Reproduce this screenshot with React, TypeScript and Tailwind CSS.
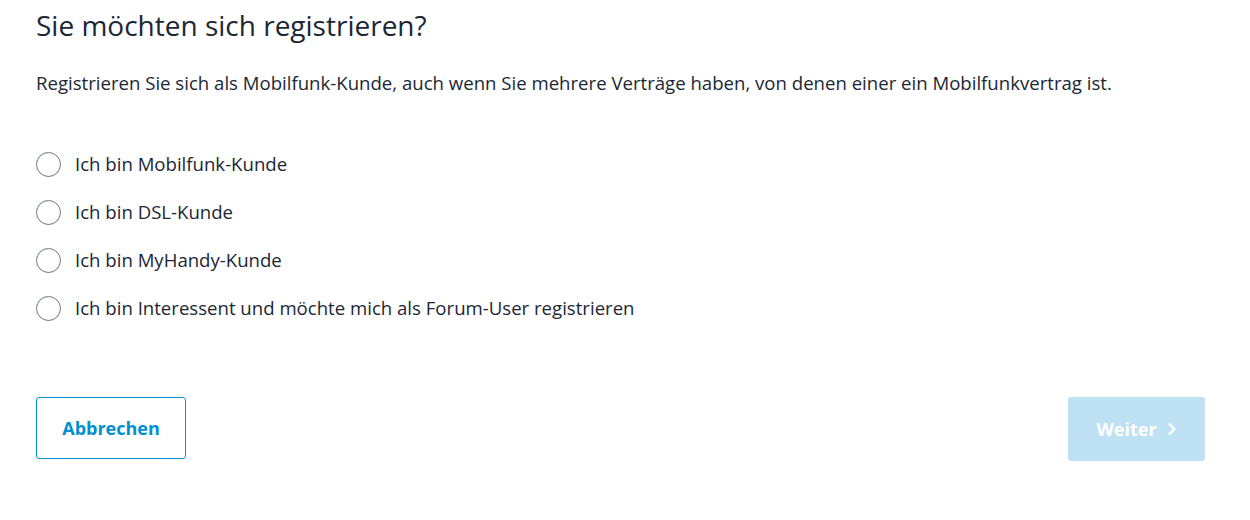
const options = [
  'Ich bin Mobilfunk-Kunde',
  'Ich bin DSL-Kunde',
  'Ich bin MyHandy-Kunde',
  'Ich bin Interessent und möchte mich als Forum-User registrieren',
];

const App = () => {
  return (
    <div className="min-h-[520px] bg-white pl-9 pr-[45px] font-['Open_Sans',sans-serif] text-[#1b2735]">
      <h1 className="pt-[6px] text-[28px] leading-[38px]">Sie möchten sich registrieren?</h1>
      <p className="mt-[26px] text-[18.6px] leading-[26px]">
        Registrieren Sie sich als Mobilfunk-Kunde, auch wenn Sie mehrere Verträge haben, von denen einer ein
        Mobilfunkvertrag ist.
      </p>
      <div className="mt-[55px] flex flex-col gap-[22px]">
        {options.map((label) => (
          <label key={label} className="flex h-[26px] cursor-pointer items-center gap-[14px] text-[18.6px]">
            <span className="h-[25px] w-[25px] rounded-full border border-[#6b7480]" />
            <span>{label}</span>
          </label>
        ))}
      </div>
      <div className="mt-[76px] flex items-start justify-between">
        <button className="h-[62px] w-[150px] rounded-[3px] border border-[#0090d0] text-[18px] font-bold text-[#0090d0]">
          Abbrechen
        </button>
        <button className="flex h-[64px] w-[137px] items-center justify-center gap-[10px] rounded-[3px] bg-[#bee1f4] text-[18px] font-bold text-white">
          Weiter
          <svg width="10" height="14" viewBox="0 0 10 14" fill="none">
            <path d="M2.5 2l5 5-5 5" stroke="white" strokeWidth="2.4" strokeLinecap="round" strokeLinejoin="round" />
          </svg>
        </button>
      </div>
    </div>
  );
};

export default App;
